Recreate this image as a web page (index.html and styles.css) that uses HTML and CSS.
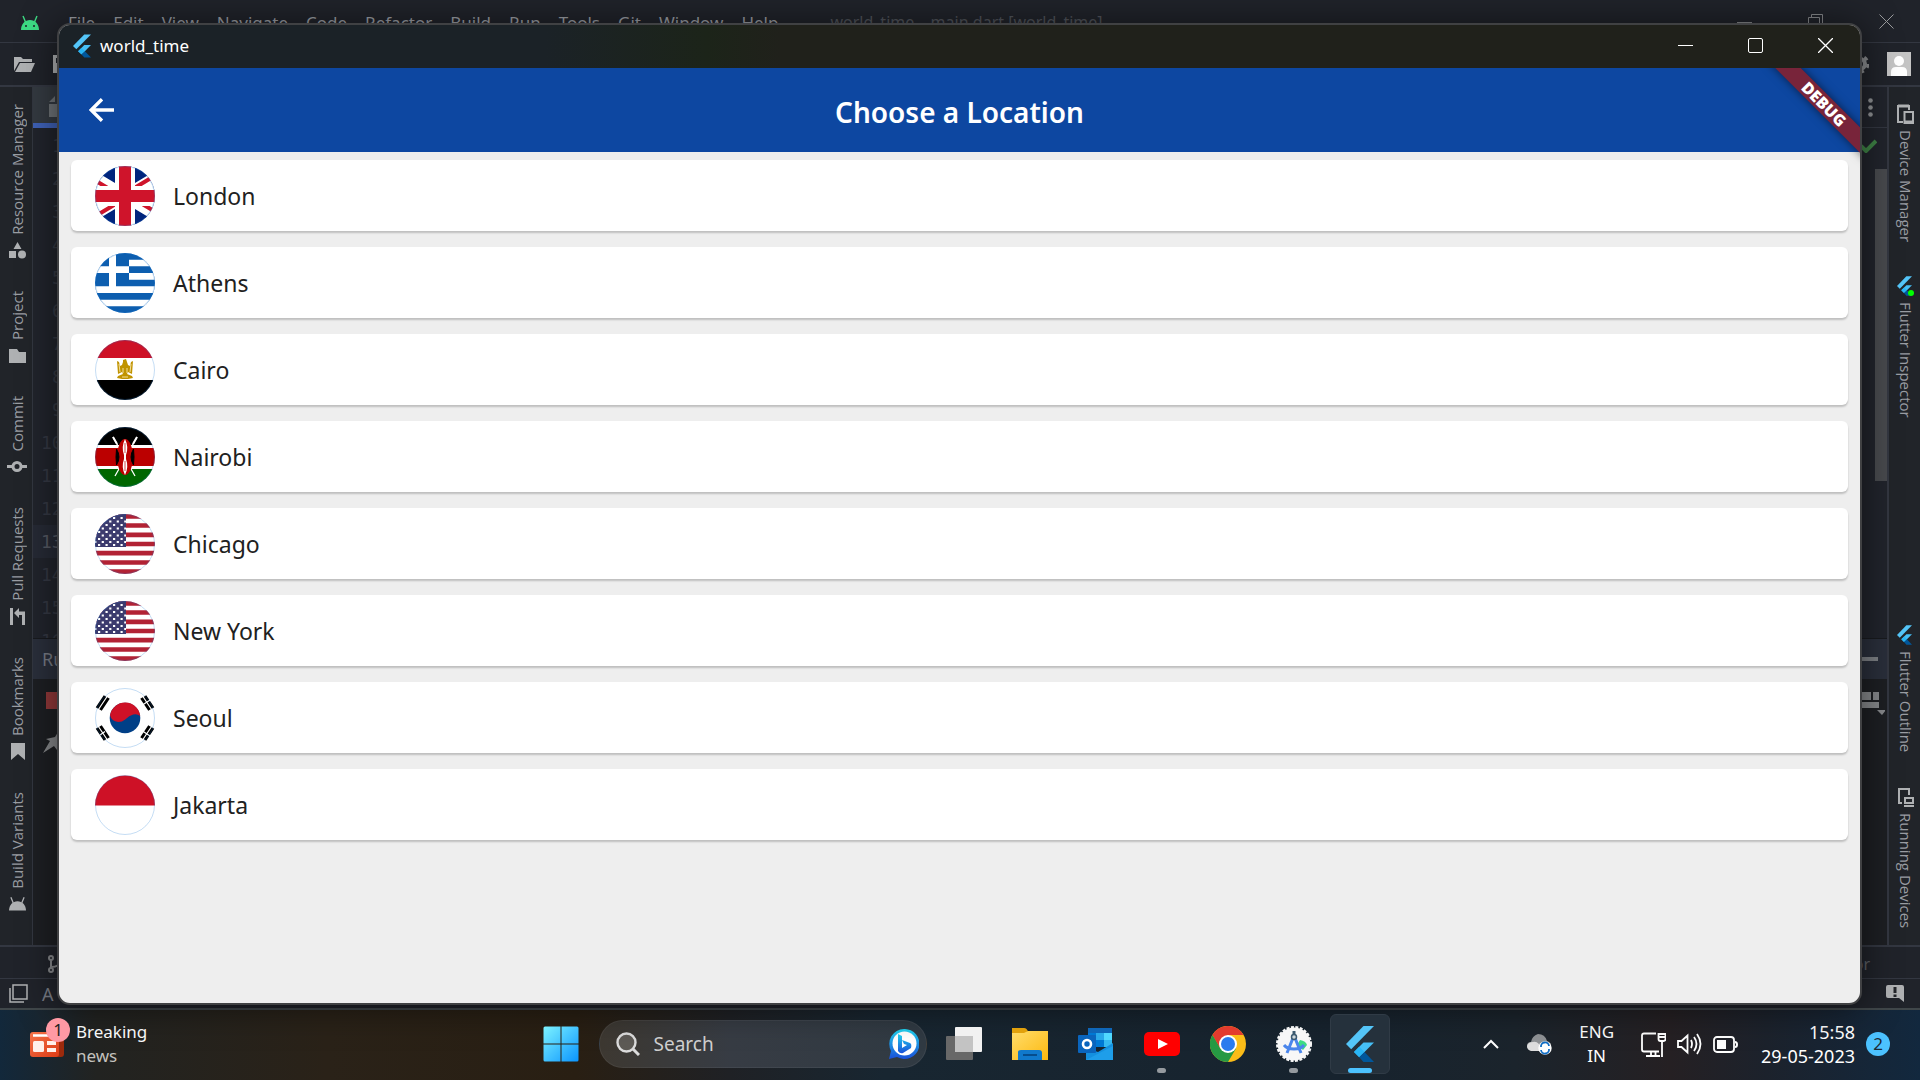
FILE: index.html
```html
<!DOCTYPE html>
<html lang="en">
<head>
<meta charset="utf-8">
<title>world_time</title>
<link rel="stylesheet" href="styles.css">
</head>
<body>
<svg class="defs" aria-hidden="true">
  <defs>
    <linearGradient id="winFill" x1="0" y1="0" x2="1" y2="1"><stop offset="0" stop-color="#7df3ff"/><stop offset="1" stop-color="#0a94ff"/></linearGradient>
    <linearGradient id="bingFill" x1="0" y1="0" x2="0" y2="1"><stop offset="0" stop-color="#20d5f2"/><stop offset="1" stop-color="#1a4fd8"/></linearGradient>
    <linearGradient id="folderFill" x1="0" y1="0" x2="1" y2="1"><stop offset="0" stop-color="#ffdc6b"/><stop offset="1" stop-color="#fdb90f"/></linearGradient>
    <linearGradient id="newsFill" x1="0" y1="0" x2="1" y2="1"><stop offset="0" stop-color="#f4734a"/><stop offset="1" stop-color="#dc3b14"/></linearGradient>
    <clipPath id="disc"><circle cx="30" cy="30" r="30"/></clipPath>
    <clipPath id="saltire"><path d="M25 15h25v15zv15H0zH0V0zV0h25z"/></clipPath>
    <symbol id="flutter" viewBox="0 0 28 36">
      <path d="M17.500 0H28L5.200 23.200 0 18z" fill="#54c5f8"/>
      <path d="M17.500 16.500H28L18.500 26 13.200 31 8 26z" fill="#46bff6"/>
      <path d="M8 26l5.200-5.200L18.500 26l-5.300 5.200z" fill="#29b6f6"/>
      <path d="M13.200 31.200l5.300-5.200L28 36H17.500z" fill="#01579b"/>
    </symbol>
    <symbol id="droid" viewBox="0 0 18 15">
      <path d="M0 15C0 9 4 5 9 5s9 4 9 10z"/>
      <path d="M4.500 7L2 1M13.500 7L16 1" stroke="currentColor" stroke-width="1.400" fill="none"/>
    </symbol>
    <symbol id="flag-us" viewBox="0 0 60 60">
      <path fill="#fff" d="M0 0h60v60H0z"/>
      <path stroke="#b22234" stroke-width="4.700" d="M0 2.300h60M0 11.500h60M0 20.800h60M0 30h60M0 39.200h60M0 48.500h60M0 57.700h60"/>
      <path fill="#3c3b6e" d="M0 0h31v33H0z"/>
      <g fill="none" stroke="#fff" stroke-width="2.200" stroke-dasharray="2.200 5.300">
        <path d="M3 4h28M3 11h28M3 18h28M3 25h28M3 31h28"/>
        <path d="M6.700 7.500H31M-.800 14.500H31M-.800 21.500H31M-.800 28H31"/>
      </g>
    </symbol>
  </defs>
</svg>

<main class="desktop">
  <section class="ide" aria-label="Android Studio">
    <header class="ide-menu">
      <svg class="ide-logo" viewBox="0 0 18 15" fill="#3ddc84" color="#3ddc84"><use href="#droid"/><circle cx="5" cy="11" r="1" fill="#1e2127"/><circle cx="13" cy="11" r="1" fill="#1e2127"/></svg>
      <nav class="menus">
        <button>File</button><button>Edit</button><button>View</button><button>Navigate</button><button>Code</button><button>Refactor</button><button>Build</button><button>Run</button><button>Tools</button><button>Git</button><button>Window</button><button>Help</button>
      </nav>
      <span class="ide-title">world_time – main.dart [world_time]</span>
      <div class="ide-controls">
        <svg width="15" height="16" viewBox="0 0 15 16"><path d="M0 8.500h15" stroke="#85878a"/></svg>
        <svg width="15" height="16" viewBox="0 0 15 16" fill="none" stroke="#85878a"><path d="M.5 3.500h11v12H.500zM3.500 3V.500h11v11H12"/></svg>
        <svg width="15" height="16" viewBox="0 0 15 16" stroke="#9a9b9d"><path d="M.5.500l14 14M14.500.500l-14 14"/></svg>
      </div>
    </header>
    <div class="ide-toolbar">
      <svg width="21" height="16" viewBox="0 0 21 16" fill="#afb1b3"><path d="M0 15V1h7l2 2h9v3H5z"/><path d="M6 7h15l-4 9H1z"/></svg>
      <svg width="18" height="18" viewBox="0 0 18 18" fill="#afb1b3"><path d="M0 0h14l4 4v14H0zM3 3v5h10V3z"/></svg>
      <svg class="gear" width="18" height="20" viewBox="0 0 18 20" fill="none" stroke="#8b8d90"><circle cx="9" cy="10" r="5" stroke-width="4"/><circle cx="9" cy="10" r="8" stroke-width="3" stroke-dasharray="4 4.400"/></svg>
      <svg width="24" height="24" viewBox="0 0 24 24"><path fill="#c4c4c4" d="M0 0h24v24H0z"/><circle cx="12" cy="9" r="5" fill="#fff"/><path fill="#fff" d="M4 24v-4q0-5 5-5h6q5 0 5 5v4z"/></svg>
    </div>
    <div class="ide-body">
      <aside class="strip strip-left">
        <button><span>Resource Manager</span><svg width="17" height="17" viewBox="0 0 17 17"><path d="M8.500 0l4 7h-8zM0 9h7v7H0z"/><circle cx="13" cy="12.500" r="4"/></svg></button>
        <button><span>Project</span><svg width="17" height="17" viewBox="0 0 17 17"><path d="M0 2h8l2 3h7v11H0z"/></svg></button>
        <button><span>Commit</span><svg class="line" width="20" height="17" viewBox="0 0 20 17" stroke-width="3"><circle cx="10" cy="8.500" r="4"/><path d="M0 8.500h6M14 8.500h6"/></svg></button>
        <button><span>Pull Requests</span><svg width="17" height="17" viewBox="0 0 17 17"><path d="M1 0h3v17H1zM5 5l5-5v3.500h6V17h-3V7h-3v3z"/></svg></button>
        <button><span>Bookmarks</span><svg width="17" height="17" viewBox="0 0 17 17"><path d="M2 0h14v17l-7-6-7 6z"/></svg></button>
        <button><span>Build Variants</span><svg width="17" height="15" color="#afb1b3"><use href="#droid"/></svg></button>
      </aside>
      <div class="work">
        <div class="editor">
          <div class="tabs"><div class="tab"><svg width="18" height="21" viewBox="0 0 18 21" fill="#6f7478"><path d="M0 6l6-6v6zM8 0h10v21H0V8h8z"/></svg></div>
            <svg class="kebab" width="5" height="19" viewBox="0 0 5 19" fill="#8f9194"><circle cx="2.500" cy="2.500" r="2.300"/><circle cx="2.500" cy="9.500" r="2.300"/><circle cx="2.500" cy="16.500" r="2.300"/></svg></div>
          <div class="code">
            <ol class="lines"><li>1</li><li>2</li><li>3</li><li>4</li><li>5</li><li>6</li><li>7</li><li>8</li><li>9</li><li>10</li><li>11</li><li>12</li><li class="current">13</li><li>14</li><li>15</li><li>16</li></ol>
            <div class="gutter"><svg width="17" height="14" viewBox="0 0 17 14"><path d="M1 7l5 5L16 2" fill="none" stroke="#3f8346" stroke-width="4"/></svg><div class="thumb"></div></div>
          </div>
        </div>
        <div class="run-head"><span>Run:</span><i class="dash"></i></div>
        <div class="run-tools">
          <div class="run-left"><i class="stop"></i><svg width="24" height="24" viewBox="0 0 24 24" fill="#86888b"><path d="M0 24l7-12-4-2 9-2 5-8 7 7-8 5-2 9-3-4z"/></svg></div>
          <svg class="run-layout" width="24" height="24" viewBox="0 0 24 24" fill="#86888b"><path d="M0 0h10v8H0zM12 0h6v8h-6zM0 10h18v6H0zM16 18h9l-4 5z"/></svg>
        </div>
      </div>
      <aside class="strip strip-right">
        <button><svg class="line" width="17" height="20" viewBox="0 0 17 20" stroke-width="2"><path d="M6 18H1V2h11v4M7.500 8h8.500v11H7.500z"/><path d="M1 2h11" stroke-width="3"/><path d="M7 18h10" stroke-width="3"/></svg><span>Device Manager</span></button>
        <button><svg width="17" height="20" viewBox="0 0 17 20"><use href="#flutter" width="15" height="20"/><circle cx="14" cy="17" r="3" fill="#0f0"/></svg><span>Flutter Inspector</span></button>
        <button class="push"><svg width="17" height="20" viewBox="0 0 17 20"><use href="#flutter" width="15" height="20"/></svg><span>Flutter Outline</span></button>
        <button><svg class="line" width="17" height="20" viewBox="0 0 17 20" stroke-width="2"><path d="M5 16H2V2h10v6M8 11h8v5H8zM7 19h10"/></svg><span>Running Devices</span></button>
      </aside>
    </div>
    <div class="ide-bottom">
      <svg width="18" height="18" viewBox="0 0 18 18" fill="none" stroke="#86888b" stroke-width="2"><circle cx="3" cy="3" r="2"/><circle cx="3" cy="15" r="2"/><circle cx="12" cy="4" r="2"/><path d="M3 4v10M3 12q9 0 9-6"/></svg>
      <span>Layout Inspector</span>
    </div>
    <footer class="ide-status">
      <svg width="19" height="19" viewBox="0 0 19 19" fill="none" stroke="#afb1b3" stroke-width="1.500"><path d="M4 1h14v14H4zM1 4v14h14"/></svg>
      <span>A</span>
      <svg class="alert" width="18" height="18" viewBox="0 0 18 18"><path d="M2 0h14q2 0 2 2v15l-5-4H2q-2 0-2-2V2q0-2 2-2z" fill="#afb1b3"/><path d="M9 2v6M9 9.500V12" stroke="#24262b" stroke-width="3"/></svg>
    </footer>
  </section>

  <section class="window" aria-label="world_time">
    <header class="titlebar">
      <svg width="18" height="24"><use href="#flutter"/></svg>
      <h1>world_time</h1>
      <div class="controls">
        <button aria-label="Minimize"><svg width="15" height="15" stroke="#fff"><path d="M0 7.500h15"/></svg></button>
        <button aria-label="Maximize"><svg width="15" height="15" fill="none" stroke="#fff"><rect x=".5" y=".5" width="14" height="14" rx="1.500"/></svg></button>
        <button aria-label="Close"><svg width="15" height="15" stroke="#fff" stroke-width="1.300"><path d="M0 0l15 15M15 0L0 15"/></svg></button>
      </div>
    </header>
    <div class="app">
      <header class="appbar">
        <button class="back" aria-label="Back"><svg width="25" height="24" viewBox="0 0 25 24" fill="none" stroke="#fff" stroke-width="3.400"><path d="M13 1.200L2.200 12 13 22.800M2 12h23"/></svg></button>
        <h2>Choose a Location</h2>
      </header>
      <ul class="cards">
        <li><button>
          <svg class="flag" viewBox="0 0 60 60"><g clip-path="url(#disc)"><g transform="scale(2) translate(-10 0)"><path fill="#00247d" d="M0 0h50v30H0z"/><path d="M0 0l50 30M50 0L0 30" stroke="#fff" stroke-width="6"/><path d="M0 0l50 30M50 0L0 30" clip-path="url(#saltire)" stroke="#cf142b" stroke-width="4"/><path d="M25 0v30M0 15h50" stroke="#fff" stroke-width="10"/><path d="M25 0v30M0 15h50" stroke="#cf142b" stroke-width="6"/></g></g><circle class="rim" cx="30" cy="30" r="29.500"/></svg>
          London</button></li>
        <li><button>
          <svg class="flag" viewBox="0 0 60 60"><g clip-path="url(#disc)"><path fill="#0d5eaf" d="M0 0h60v60H0z"/><path fill="#fff" d="M34 6.700h26v6.600H34zM34 20h26v6.700H34zM0 33.300h60V40H0zM0 46.700h60v6.600H0zM14 0h7v34h-7zM0 13.300h34V20H0z"/></g><circle class="rim" cx="30" cy="30" r="29.500"/></svg>
          Athens</button></li>
        <li><button>
          <svg class="flag" viewBox="0 0 60 60"><g clip-path="url(#disc)"><path fill="#fff" d="M0 0h60v60H0z"/><path fill="#ce1126" d="M0 0h60v18H0z"/><path d="M0 40h60v20H0z"/><g fill="#c09300"><path d="M28 20l3-1 1 3 1 3 2 1 1-4 2-1-1 13-4-2-1 2h-4l-1-2-4 2-1-13 2 1 1 4 2-1 1-3z"/><path d="M23 36l5-2h4l5 2 1 2-5 1h-6l-5-1z"/></g><path d="M24 24l1 8M36 24l-1 8M28 28v5M32 28v5M27 37h6" stroke="#fff3c4" stroke-width=".8"/></g><circle class="rim" cx="30" cy="30" r="29.500"/></svg>
          Cairo</button></li>
        <li><button>
          <svg class="flag" viewBox="0 0 60 60"><g clip-path="url(#disc)"><path fill="#fff" d="M0 0h60v60H0z"/><path d="M0 0h60v18H0z"/><path fill="#b00" d="M0 21h60v18H0z"/><path fill="#060" d="M0 42h60v18H0z"/><path d="M18 10l22 39M42 10L20 49" stroke="#fff" stroke-width="1.300"/><path d="M18 10l4 7M42 10l-4 7" stroke="#fff" stroke-width="2"/><ellipse cx="30" cy="30" rx="8" ry="18" fill="#b00"/><path d="M21.500 22q5 8 0 16-1-8 0-16zM38.500 22q-5 8 0 16 1-8 0-16z" stroke="#000"/><path fill="#fff" d="M30 12q4 8 1 16v4q3 8-1 16-4-8-1-16v-4q-3-8 1-16z"/><path d="M30 16v10M30 34v10" stroke="#b00" stroke-width=".7"/></g><circle class="rim" cx="30" cy="30" r="29.500"/></svg>
          Nairobi</button></li>
        <li><button>
          <svg class="flag" viewBox="0 0 60 60"><g clip-path="url(#disc)"><use href="#flag-us"/></g><circle class="rim" cx="30" cy="30" r="29.500"/></svg>
          Chicago</button></li>
        <li><button>
          <svg class="flag" viewBox="0 0 60 60"><g clip-path="url(#disc)"><use href="#flag-us"/></g><circle class="rim" cx="30" cy="30" r="29.500"/></svg>
          New York</button></li>
        <li><button>
          <svg class="flag" viewBox="0 0 60 60"><circle cx="30" cy="30" r="30" fill="#fff"/><circle cx="30" cy="30" r="15.300" fill="#003f87"/><path fill="#ce1126" d="M15 27A15.300 15.300 0 0 1 45.200 28q-3-2.500-7-1.500-4 1-8 5-3 2.500-7 2.500-7-1-8.200-7z"/><g stroke="#000" stroke-width="3"><path d="M2 20L10 8M5.500 22L13.500 10"/><path d="M58 20L50 8M54.500 22L46.500 10"/><path d="M2 40L10 52M5.500 38L13.500 50"/><path d="M58 40L50 52M54.500 38L46.500 50"/></g><path d="M46 18l12-8M46 42l12 8M5 47l5-3.500" stroke="#fff" stroke-width="1.200"/><circle class="rim" cx="30" cy="30" r="29.500"/></svg>
          Seoul</button></li>
        <li><button>
          <svg class="flag" viewBox="0 0 60 60"><circle cx="30" cy="30" r="30" fill="#fff"/><path fill="#ce1126" d="M0 30.500a30 30 0 0 1 60 0z"/><circle class="rim" cx="30" cy="30" r="29.500"/></svg>
          Jakarta</button></li>
      </ul>
      <div class="ribbon">DEBUG</div>
    </div>
  </section>
</main>

<footer class="taskbar">
  <button class="widgets">
    <span class="news"><svg width="34" height="26" viewBox="0 0 34 26"><rect x="6" y="1" width="28" height="24" rx="3" fill="#9c2a0c"/><rect width="29" height="25" rx="3" fill="url(#newsFill)"/><path d="M3 3.500h23" stroke="#fff" stroke-width="2.500"/><rect x="3" y="9" width="11" height="11" rx="1.500" fill="#fff0ea"/><path d="M17 11h9M17 18h9" stroke="#fff0ea" stroke-width="4"/></svg><b>1</b></span>
    <span class="headline"><span>Breaking</span><span class="sub">news</span></span>
  </button>
  <nav class="pinned">
    <button aria-label="Start"><svg width="36" height="36" viewBox="0 0 36 36" fill="url(#winFill)"><path d="M2 .500h15.500v17H.500V2Q.500.500 2 .500zM18.500.500H34q1.500 0 1.500 1.500v15.500h-17zM.500 18.500h17v17H2Q.500 35.500.500 34zM18.500 18.500h17V34q0 1.500-1.500 1.500H18.500z"/></svg></button>
    <label class="search">
      <svg width="24" height="24" viewBox="0 0 24 24" fill="none" stroke="#dcdcdc" stroke-width="2.400"><circle cx="10.500" cy="10.500" r="9" fill="#5d5a55"/><path d="M17 17l6 6" stroke-width="3"/></svg>
      <input type="text" placeholder="Search" aria-label="Search">
      <svg width="30" height="30" viewBox="0 0 30 30"><path d="M15 0a15 15 0 1 1-7 28L0 30l2-8A15 15 0 0 1 15 0z" fill="url(#bingFill)"/><circle cx="15.500" cy="14.500" r="12" fill="#fff"/><path d="M9 5l4 2v12l5-3-3-1-2-4 8 3q2 1 1 5l-8 5q-3 1-5-2z" fill="url(#bingFill)"/></svg>
    </label>
    <button aria-label="Task view"><svg width="36" height="36" viewBox="0 0 36 36"><rect x="0" y="10" width="27" height="24" rx="1" fill="#686868"/><rect x="9" y="1" width="27" height="25" rx="1" fill="#f1f1f1"/><path d="M9 10h18v16H9z" fill="#c3c3c3"/></svg></button>
    <button aria-label="File Explorer"><svg width="36" height="36" viewBox="0 0 36 36"><path d="M0 2h12q3 0 4 4v4H0z" fill="#e2a10c"/><path d="M0 7h12l4-2h20v29H0z" fill="url(#folderFill)"/><path d="M6 34V26q0-2 3-2h18q3 0 3 3v7z" fill="#1079cc"/><path d="M11 29h14" stroke="#064d8d" stroke-width="2"/></svg></button>
    <button aria-label="Outlook"><svg width="36" height="36" viewBox="0 0 36 36"><path fill="#0f66b8" d="M10 2h24v14H10z"/><path fill="#28a8ea" d="M18 7h8v7h-8z"/><path fill="#50d9ff" d="M26 7h8v7h-8z"/><path fill="#0078d4" d="M10 7h8v14h-8zM18 14h8v7h-8z"/><path fill="#35b8f1" d="M26 14h8v7h-8z"/><path fill="#1490df" d="M8 22l12 4 15-9v17H8z"/><path fill="#1e9eea" d="M8 34L35 20v14z"/><rect y="9" width="18" height="18" rx="1" fill="#0a65bd"/><circle cx="9" cy="18" r="4" fill="none" stroke="#fff" stroke-width="2.600"/></svg></button>
    <button class="open" aria-label="YouTube"><svg width="36" height="36" viewBox="0 0 36 36"><rect y="6" width="36" height="24" rx="5" fill="red"/><path d="M14 13l10 5-10 5z" fill="#fff"/></svg></button>
    <button aria-label="Chrome"><svg width="36" height="36" viewBox="0 0 36 36"><circle cx="18" cy="18" r="18" fill="#fbbc18"/><path d="M2.400 9A18 18 0 0 1 33.600 9H18z" fill="#e33b2e"/><path d="M2.400 9A18 18 0 0 0 18 36l8-13.500H10.200z" fill="#269943"/><path d="M2.400 9L10.200 22.500 18 9z" fill="#e33b2e"/><path d="M2.400 9l7.800 13.500L5 22z" fill="#269943"/><circle cx="18" cy="18" r="9" fill="#fff"/><circle cx="18" cy="18" r="7" fill="#2a7bee"/></svg></button>
    <button class="open" aria-label="Android Studio"><svg width="36" height="36" viewBox="0 0 36 36"><circle cx="18" cy="18" r="16.500" fill="#f7f7f7"/><circle cx="18" cy="18" r="17" fill="none" stroke="#f7f7f7" stroke-width="2" stroke-dasharray="3 1.500"/><path d="M24 14q6 1 7 5l-4 5-6-5z" fill="#3ddc84"/><path d="M17 12l-6 15M19 12l6 15M8 19q3 4 10 4t10-4" fill="none" stroke="#4a86ec" stroke-width="3"/><path d="M18 5v4" stroke="#3c5a70" stroke-width="3"/><circle cx="18" cy="11" r="2.500" fill="#cfd8dc" stroke="#3c5a70" stroke-width="1.500"/></svg></button>
    <button class="active" aria-label="world_time"><svg width="28" height="36"><use href="#flutter"/></svg></button>
  </nav>
  <div class="tray">
    <button aria-label="Show hidden icons"><svg width="16" height="10" viewBox="0 0 16 10" fill="none" stroke="#fff" stroke-width="2"><path d="M1 9l7-7 7 7"/></svg></button>
    <svg class="cloud" width="25" height="21" viewBox="0 0 25 21"><path d="M6 16q-6 0-6-4 0-4 4-4 1-6 7-8 7 0 9 7 4 1 4 5l-3 4z" fill="#8f9295"/><path d="M4 17q-4-1-4-5 1-4 6-4 3-1 6 2l4 7z" fill="#dedede"/><circle cx="18" cy="14" r="6.700" fill="#fff"/><path d="M14 13a4 4 0 0 1 8-1M22 15a4 4 0 0 1-8 1" fill="none" stroke="#0f6cc4" stroke-width="1.800"/></svg>
    <button class="lang"><span>ENG</span><span>IN</span></button>
    <button class="status" aria-label="Network, volume and battery">
      <svg width="25" height="25" viewBox="0 0 25 25" fill="none" stroke="#fff" stroke-width="1.800"><path d="M15 1.500H3q-2 0-2 2v14q0 2 2 2h15M10 20v4M14.500 20v4M5 24h14M21 10v15M17.500 2h7v5q0 2-2 2h-3q-2 0-2-2zM17 5h7"/></svg>
      <svg width="25" height="22" viewBox="0 0 25 22" fill="none" stroke="#fff" stroke-width="1.800"><path d="M1 8h3.500l6-5.500v17l-6-5.500H1zM14 7q2 4 0 8M17 4q5 7 0 14M20 1q7 10 0 20"/></svg>
      <svg width="25" height="17" viewBox="0 0 25 17" fill="none" stroke="#fff" stroke-width="1.800"><rect x="1" y="1" width="20" height="15" rx="3"/><rect x="4" y="4" width="9" height="9" fill="#fff" stroke="none"/><path d="M22 6q2 0 2 2.500T22 11" stroke-width="2"/></svg>
    </button>
    <button class="clock"><span>15:58</span><span>29-05-2023</span></button>
    <span class="count">2</span>
  </div>
</footer>
</body>
</html>
```
FILE: styles.css
```css
* { box-sizing: border-box; }

body {
  margin: 0;
  height: 100vh;
  display: grid;
  grid-template-rows: minmax(0, 1fr) 72px;
  font-family: "Noto Sans", "Open Sans", sans-serif;
  background: #1c1f24;
  overflow: hidden;
}

h1, h2, ul, ol { margin: 0; padding: 0; list-style: none; }

button {
  font: inherit;
  color: inherit;
  background: none;
  border: 0;
  padding: 0;
}

svg { display: block; flex: none; }

.defs { position: absolute; width: 0; height: 0; }

.desktop {
  position: relative;
  display: grid;
  grid-template-rows: minmax(0, 1fr);
}

/* IDE behind the app window */
.ide {
  display: flex;
  flex-direction: column;
  background: #20232a;
  color: #9a9da3;
  font-size: 16px;
}

.ide-menu {
  display: flex;
  align-items: center;
  flex: none;
  height: 43px;
  padding: 2px 26px 0 21px;
  border-bottom: 1px solid #333741;
}

.ide-logo { width: 18px; height: 15px; }

.menus { display: flex; gap: 18px; margin-left: 29px; font-size: 17px; }

.ide-title { margin-left: 52px; color: #50535a; }

.ide-controls { display: flex; gap: 56px; margin-left: auto; }

.ide-toolbar {
  display: flex;
  align-items: center;
  flex: none;
  gap: 18px;
  height: 44px;
  padding: 0 9px 0 14px;
  border-bottom: 2px solid #333741;
}

.gear { margin-left: auto; }

.ide-body { flex: 1; display: flex; min-height: 0; }

.strip {
  display: flex;
  flex-direction: column;
  align-items: center;
  width: 33px;
  padding: 17px 0;
  background: #212429;
  font: 15px/18px "Open Sans", "Noto Sans", sans-serif;
}

.strip button {
  display: flex;
  flex-direction: column;
  align-items: center;
  gap: 7px;
}

.strip svg { fill: #afb1b3; }
.strip .line { fill: none; stroke: #afb1b3; }
.strip span { writing-mode: vertical-rl; white-space: nowrap; }
.strip-left { gap: 32px; padding-left: 2px; border-right: 1px solid #333741; }
.strip-left span { transform: rotate(180deg); }
.strip-right { gap: 34px; padding-left: 2px; border-left: 2px solid #333741; }
.strip-right button { gap: 6px; }
.strip-right .push { margin-top: auto; }

.work { flex: 1; display: flex; flex-direction: column; min-width: 0; }
.editor { flex: 1; display: flex; flex-direction: column; min-height: 0; background: #21242c; }

.tabs {
  display: flex;
  align-items: center;
  justify-content: space-between;
  height: 41px;
  padding-right: 14px;
  flex: none;
  border-bottom: 1px solid #333741;
}

.tab {
  width: 160px;
  height: 41px;
  padding: 9px 0 0 16px;
  background: #343a41;
  border-bottom: 5px solid #3f62b8;
}

.code { flex: 1; display: flex; min-height: 0; overflow: hidden; }

.lines {
  flex: 1;
  padding-top: 1px;
  font: 18px/33px "DejaVu Sans Mono", monospace;
  color: #343843;
}

.lines li { padding-left: 19px; }
.lines li:nth-child(n+10) { padding-left: 8px; }
.lines .current { background: #262a35; color: #555963; }

.gutter {
  display: flex;
  flex-direction: column;
  align-items: flex-end;
  gap: 16px;
  width: 28px;
  padding-top: 11px;
}

.gutter svg { margin-right: 10px; }
.thumb { width: 12px; height: 312px; background: #484a4e; }

.run-head {
  display: flex;
  align-items: center;
  justify-content: space-between;
  flex: none;
  height: 41px;
  padding: 0 9px;
  background: #2a2f3b;
  border-top: 1px solid #181a1e;
  font-size: 18px;
  color: #777b84;
}

.dash { width: 20px; height: 4px; background: #7d8085; }

.run-tools {
  display: flex;
  justify-content: space-between;
  flex: none;
  height: 266px;
  padding: 13px 2px 0 10px;
  background: #1d1f23;
}

.run-left { display: flex; flex-direction: column; gap: 20px; }
.stop { width: 17px; height: 17px; margin-left: 3px; background: #93393a; }

.ide-bottom {
  display: flex;
  align-items: center;
  justify-content: space-between;
  flex: none;
  height: 33px;
  padding: 2px 50px 0 48px;
  border-top: 2px solid #333741;
  color: #5d6066;
}

.ide-status {
  display: flex;
  align-items: center;
  gap: 14px;
  flex: none;
  height: 30px;
  padding: 0 16px 0 9px;
  border-top: 1px solid #333741;
  font-size: 18px;
  line-height: 24px;
  color: #777b84;
}

.alert { margin-left: auto; }

/* Floating app window */
.window {
  position: absolute;
  inset: 23px 58px 3px 57px;
  display: flex;
  flex-direction: column;
  border: 2px solid #404143;
  border-radius: 13px;
  overflow: hidden;
  background: #eee;
  box-shadow: 0 2px 36px rgba(0, 0, 0, .55);
}

.titlebar {
  display: flex;
  align-items: center;
  height: 43px;
  padding: 0 0 2px 14px;
  color: #fff;
  background: linear-gradient(90deg, #1b2227 0, #1b2227 27%, #1c2419 36%, #20211b 40%);
}

.titlebar h1 { margin-left: 9px; font-size: 17px; font-weight: 400; }
.controls { display: flex; height: 100%; margin-left: auto; }
.controls button { display: grid; place-items: center; width: 70px; }

.app { position: relative; flex: 1; overflow: hidden; }

.appbar {
  display: grid;
  grid-template-columns: 1fr auto 1fr;
  align-items: center;
  height: 84px;
  padding: 0 30px;
  color: #fff;
  background: #0d47a1;
}

.back { justify-self: start; }
.appbar h2 { padding-top: 4px; font-size: 28px; line-height: 40px; font-weight: 600; }

.cards {
  display: flex;
  flex-direction: column;
  gap: 16px;
  padding: 8px 12px;
}

.cards button {
  display: flex;
  align-items: center;
  gap: 18px;
  width: 100%;
  height: 71px;
  padding: 0 24px;
  border-radius: 6px;
  background: #fff;
  box-shadow: 0 2px 2px rgba(0, 0, 0, .2);
  font-size: 23px;
  line-height: 32px;
  color: #212121;
}

.flag { width: 60px; height: 60px; }
.rim { fill: none; stroke: rgba(25, 118, 210, .25); }

.ribbon {
  position: absolute;
  top: 27px;
  right: -34px;
  width: 140px;
  transform: rotate(45deg);
  background: #78243a;
  box-shadow: 0 0 10px rgba(0, 0, 0, .55);
  color: #fff;
  font: 800 16px/18px "Open Sans", sans-serif;
  text-align: center;
}

/* Taskbar */
.taskbar {
  display: grid;
  grid-template-columns: 1fr auto 1fr;
  align-items: center;
  padding-bottom: 2px;
  border-top: 2px solid #40474a;
  color: #fff;
  font-size: 17px;
  line-height: 24px;
  background: linear-gradient(90deg, #12283b 0, #222321 5%, #2a2218 17%, #291f13 30%, #1f2125 38%, #182631 46%, #17232e 70%, #1b242c 79%, #252023 87%, #1c222c 92%, #12283e 100%);
}

.widgets {
  display: flex;
  align-items: center;
  gap: 12px;
  padding-left: 30px;
  text-align: left;
}

.news { position: relative; padding-top: 2px; }

.news b {
  position: absolute;
  top: -12px;
  left: 16px;
  width: 24px;
  border-radius: 50%;
  background: #ff99a4;
  color: #222;
  font-weight: 400;
  text-align: center;
}

.headline { display: grid; }
.sub { color: #c4c2be; }

.pinned { display: flex; align-items: center; gap: 6px; }

.pinned button {
  position: relative;
  display: grid;
  place-items: center;
  width: 60px;
  height: 60px;
  border: 1px solid transparent;
  border-radius: 6px;
}

.pinned .active { background: #25313c; border-color: #303b46; }

.pinned .open::after,
.pinned .active::after {
  content: "";
  position: absolute;
  bottom: 0;
  width: 9px;
  height: 5px;
  border-radius: 3px;
  background: #959a9f;
}

.pinned .active::after { width: 24px; background: #4cc2ff; }

.search {
  display: flex;
  align-items: center;
  gap: 14px;
  width: 328px;
  height: 48px;
  margin: 0 1px 0 2px;
  padding: 0 7px 0 16px;
  border: 1px solid rgba(255, 255, 255, .06);
  border-radius: 24px;
  background: linear-gradient(90deg, #3d3831, #373c44 40%, #303a43);
}

.search input {
  flex: 1;
  min-width: 0;
  padding: 0;
  border: 0;
  outline: 0;
  background: none;
  font: 19px/28px "Noto Sans", sans-serif;
  color: #d0d0d0;
}

.search input::placeholder { color: #d0d0d0; opacity: 1; }

.tray {
  display: flex;
  align-items: center;
  justify-content: flex-end;
  padding-right: 30px;
}

.cloud { margin: 0 27px 0 28px; }
.lang, .clock { display: grid; }
.status { display: flex; align-items: center; gap: 11px; margin: 0 23px 0 27px; }
.clock { font-size: 18px; text-align: right; }

.count {
  width: 24px;
  margin-left: 11px;
  border-radius: 50%;
  background: #4cc2ff;
  color: #1c2a36;
  text-align: center;
}
```
